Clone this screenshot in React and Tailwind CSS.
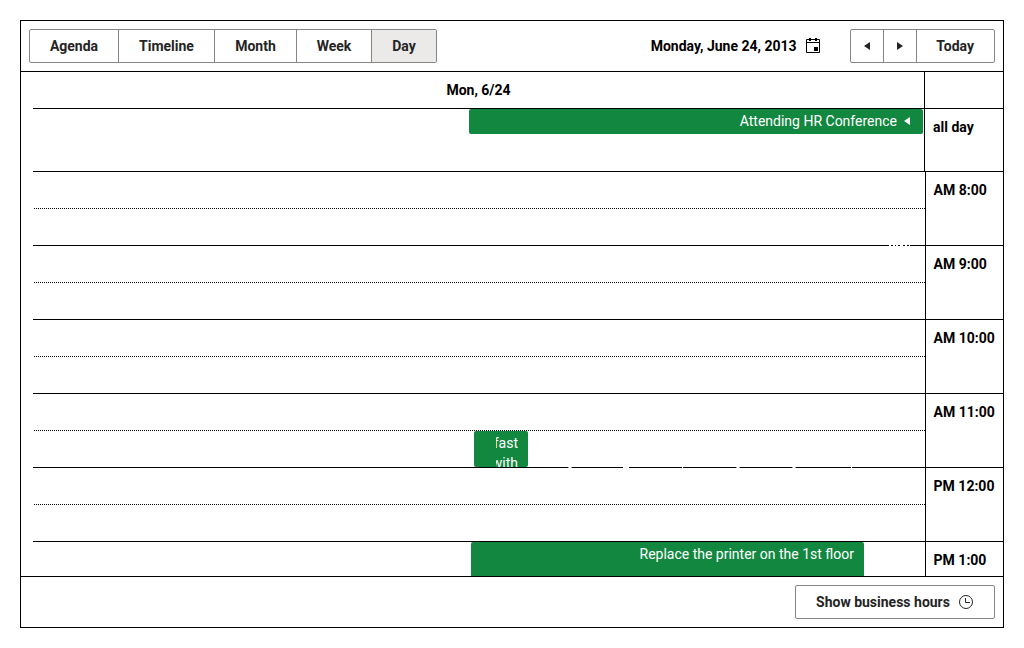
const views = [
  ["Agenda", "w-[89px]"],
  ["Timeline", "w-[96px]"],
  ["Month", "w-[82px]"],
  ["Week", "w-[75px]"],
  ["Day", "w-[64px]"],
];
const hours = ["AM 8:00", "AM 9:00", "AM 10:00", "AM 11:00", "PM 12:00", "PM 1:00"];

const Left = () => (
  <svg width="16" height="16" viewBox="0 0 16 16" fill="currentColor"><path d="M11 4v8L5 8z" /></svg>
);
const Right = () => (
  <svg width="16" height="16" viewBox="0 0 16 16" fill="currentColor"><path d="M5 4v8l6-4z" /></svg>
);

function Toolbar() {
  return (
    <header className="flex h-[51px] shrink-0 items-center justify-between border-b border-black px-2">
      <div className="flex h-[34px] overflow-hidden rounded-[2px] border border-[#858585] text-[#242424]">
        {views.map(([name, width], i) => (
          <button
            key={name}
            className={`${width} text-center font-bold ${i < 4 ? "border-r border-[#858585]" : "bg-[#ebeae8]"}`}
          >
            {name}
          </button>
        ))}
      </div>
      <div className="flex items-center">
        <span className="font-bold">Monday, June 24, 2013</span>
        <svg className="ml-[8.4px] mr-[29px]" width="16" height="16" viewBox="0 0 16 16">
          <path d="M1.5 1.5h13v13h-13zM1.5 4.5h13" fill="none" stroke="#000" />
          <path d="M4 0h2v3H4zM10 0h2v3h-2zM9 9h4v4H9z" />
        </svg>
        <div className="flex h-[34px] rounded-[2px] border border-[#858585] text-[#242424]">
          <button className="flex w-[33px] items-center justify-center border-r border-[#858585]"><Left /></button>
          <button className="flex w-[33px] items-center justify-center border-r border-[#858585]"><Right /></button>
          <button className="w-[77px] pr-[0.8px] font-bold">Today</button>
        </div>
      </div>
    </header>
  );
}

function Hour({ label }) {
  return (
    <div className="flex h-[74px] shrink-0">
      <div className="flex w-[892px] flex-col pl-px">
        <div className="h-[37px] border-b border-dotted border-black" />
        <div className="-ml-px h-[37px] border-b border-black" />
      </div>
      <div className="flex-1 border-b border-l border-black pl-[7.6px] pt-2 font-bold leading-5">{label}</div>
    </div>
  );
}

export default function App() {
  return (
    <div className="h-[648px] bg-white p-5 font-['Roboto',sans-serif] text-[14px] leading-5 text-black">
      <main className="flex h-[608px] w-[984px] flex-col border border-black">
        <Toolbar />
        <section className="flex h-[504px] flex-col overflow-hidden pl-3">
          <div className="flex h-[37px] shrink-0 border-b border-black font-bold">
            <div className="w-[891px] pt-2 text-center">Mon, 6/24</div>
            <div className="flex-1 border-l border-black" />
          </div>
          <div className="flex h-[63px] shrink-0 border-b border-black">
            <div className="flex w-[891px] justify-end pr-px">
              <div className="flex h-[25px] w-[454px] items-start justify-end rounded-[2px] bg-[#128740] pr-2 pt-[2px] text-white">
                <span>Attending HR Conference</span>
                <span className="ml-[2px] mt-[2px]"><Left /></span>
              </div>
            </div>
            <div className="flex-1 border-l border-black pl-2 pt-2 font-bold">all day</div>
          </div>
          <div className="relative flex h-[404px] shrink-0 flex-col overflow-hidden">
            {hours.map((label) => <Hour key={label} label={label} />)}
            {/* slivers of white event labels crossing the hour lines */}
            <svg className="absolute left-0 top-0" width="892" height="404" viewBox="0 0 892 404" fill="#fff">
              <path d="M856 73h2v1h-2zM860 73h2v1h-2zM863 73h2v1h-2zM867 73h3v1h-3zM872 73h2v1h-2zM876 73h1v1h-1z" />
              <path d="M536 295h2v1h-2zM590 295h6v1h-6zM649 295h1v1h-1zM704 295h2v1h-2zM760 295h2v1h-2zM818 295h1v1h-1z" />
              <path opacity="0.6" d="M535 295h4v1h-4zM703 295h4v1h-4zM759 295h4v1h-4z" />
            </svg>
            <div className="absolute left-[441px] top-[259px] h-9 w-[54px] overflow-hidden rounded-[2px] bg-[#128740] text-white">
              <div className="ml-[22px] mt-[2px] flex w-[22px] flex-col items-end overflow-hidden">
                <span>fast</span>
                <span>with</span>
              </div>
            </div>
            <div className="absolute left-[438px] top-[370px] h-16 w-[393px] rounded-[2px] bg-[#128740] px-2.5 pt-[2px] text-right text-white">
              Replace the printer on the 1st floor
            </div>
          </div>
        </section>
        <footer className="flex h-[51px] items-center justify-end border-t border-black px-2">
          <button className="flex h-[34px] w-[200px] items-center justify-center gap-2 rounded-[2px] border border-[#858585] font-bold text-[#242424]">
            <span>Show business hours</span>
            <svg width="16" height="16" viewBox="0 0 16 16" fill="none" stroke="currentColor">
              <circle cx="8" cy="8" r="6.5" /><path d="M7.5 4v4.5H12" />
            </svg>
          </button>
        </footer>
      </main>
    </div>
  );
}
